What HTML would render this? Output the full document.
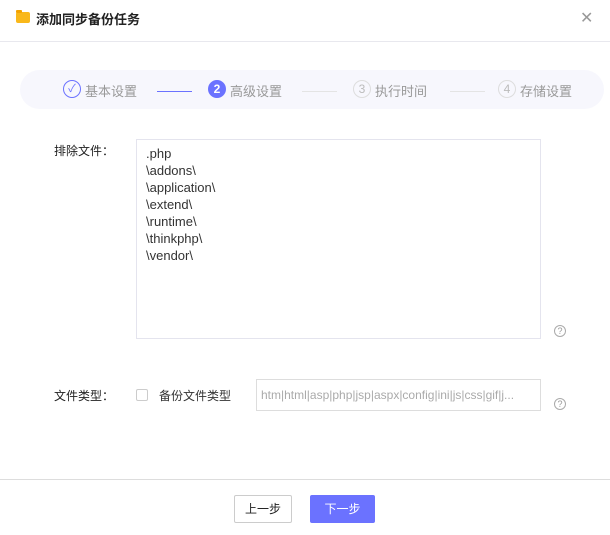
<!DOCTYPE html><html><head><meta charset="utf-8"><style>
*{margin:0;padding:0;box-sizing:border-box}
body{width:610px;height:535px;background:#fff;font-family:"Liberation Sans","Noto Sans CJK SC",sans-serif;font-size:12px;color:#333;position:relative;overflow:hidden}
.a{position:absolute}
.c{position:absolute;width:18px;height:18px;border-radius:50%;border:1px solid #ddd;color:#bbb;text-align:center;line-height:16px;font-size:12px}
.t{position:absolute;top:81px;color:#999;font-size:13px}
.q{position:absolute;width:12px;height:12px;border:1px solid #aaa;border-radius:50%;font-size:9px;line-height:10px;text-align:center;color:#999}
</style></head><body>
<div class="a" style="left:16px;top:12px;width:14px;height:11px;background:#f9b81b;border-radius:2px"></div>
<div class="a" style="left:16px;top:10px;width:6px;height:3px;background:#f4a300;border-radius:1px"></div>
<div class="a" style="left:36px;top:9px;font-weight:bold;font-size:13px;color:#222">添加同步备份任务</div>
<div class="a" style="left:580px;top:8px;font-size:16px;color:#999">✕</div>
<div class="a" style="left:0;top:41px;width:610px;height:1px;background:#e8e8ee"></div>
<div class="a" style="left:20px;top:70px;width:584px;height:39px;background:#f7f7fd;border-radius:20px"></div>
<div class="c" style="left:63px;top:80px;border-color:#6b72ff;color:#6b72ff;font-size:11px">✓</div>
<div class="t" style="left:85px">基本设置</div>
<div class="a" style="left:157px;top:91px;width:35px;height:1px;background:#6b72ff"></div>
<div class="c" style="left:208px;top:80px;background:#6b72ff;border-color:#6b72ff;color:#fff;font-weight:bold">2</div>
<div class="t" style="left:230px">高级设置</div>
<div class="a" style="left:302px;top:91px;width:35px;height:1px;background:#e4e4e4"></div>
<div class="c" style="left:353px;top:80px">3</div>
<div class="t" style="left:375px">执行时间</div>
<div class="a" style="left:450px;top:91px;width:35px;height:1px;background:#e4e4e4"></div>
<div class="c" style="left:498px;top:80px">4</div>
<div class="t" style="left:520px">存储设置</div>
<div class="a" style="left:54px;top:142px;color:#222">排除文件：</div>
<div class="a" style="left:136px;top:139px;width:405px;height:200px;border:1px solid #e4e4ee;padding:5px 9px;line-height:17px;font-size:13px;color:#333">.php<br>\addons\<br>\application\<br>\extend\<br>\runtime\<br>\thinkphp\<br>\vendor\</div>
<div class="q" style="left:554px;top:325px">?</div>
<div class="a" style="left:54px;top:387px;color:#222">文件类型：</div>
<div class="a" style="left:136px;top:389px;width:12px;height:12px;border:1px solid #ccc;border-radius:2px"></div>
<div class="a" style="left:159px;top:387px;color:#333">备份文件类型</div>
<div class="a" style="left:256px;top:379px;width:285px;height:32px;border:1px solid #ddd;padding:0 4px;line-height:30px;color:#aaa;white-space:nowrap;overflow:hidden">htm|html|asp|php|jsp|aspx|config|ini|js|css|gif|j...</div>
<div class="q" style="left:554px;top:398px">?</div>
<div class="a" style="left:0;top:479px;width:610px;height:1px;background:#ddd"></div>
<div class="a" style="left:234px;top:495px;width:58px;height:28px;border:1px solid #ccc;border-radius:2px;text-align:center;line-height:26px;color:#222">上一步</div>
<div class="a" style="left:310px;top:495px;width:65px;height:28px;background:#6b72ff;border-radius:2px;text-align:center;line-height:28px;color:#fff">下一步</div>
</body></html>
